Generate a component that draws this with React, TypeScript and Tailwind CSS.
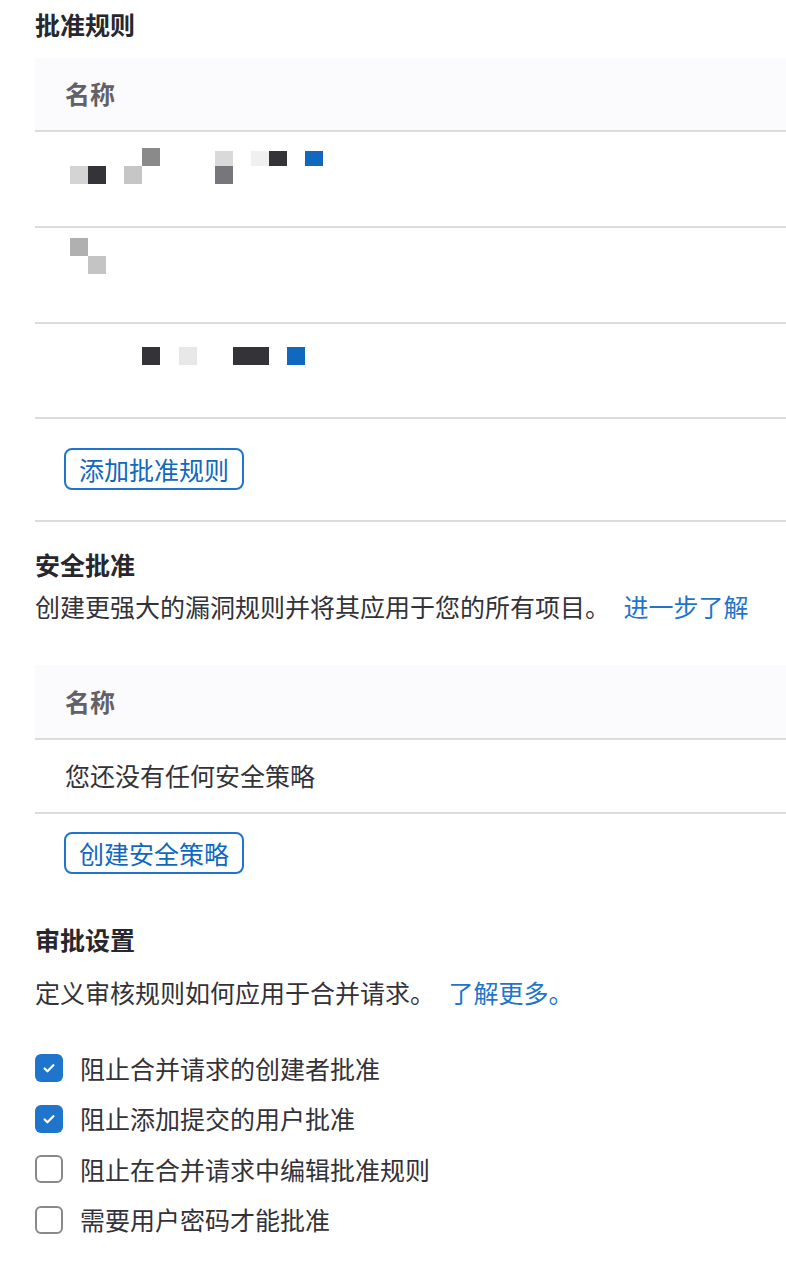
import React from "react";

type Sq = { x: number; y: number; w?: number; h?: number; c: string };

const Mosaic = ({ squares, width, height }: { squares: Sq[]; width: number; height: number }) => (
  <svg width={width} height={height} viewBox={`0 0 ${width} ${height}`}>
    {squares.map((s, i) => (
      <rect key={i} x={s.x} y={s.y} width={s.w ?? 18} height={s.h ?? 18} fill={s.c} />
    ))}
  </svg>
);

const rowOne: Sq[] = [
  { x: 0, y: 18, c: "#d4d4d4" },
  { x: 18, y: 18, c: "#333338" },
  { x: 54, y: 18, c: "#c6c6c6" },
  { x: 72, y: 0, c: "#8a8a8a" },
  { x: 145, y: 3, h: 15, c: "#d9d9d9" },
  { x: 145, y: 18, c: "#77777b" },
  { x: 181, y: 3, h: 15, c: "#f0f0f0" },
  { x: 199, y: 3, h: 15, c: "#333338" },
  { x: 235, y: 3, h: 15, c: "#1068bf" },
];

const rowTwo: Sq[] = [
  { x: 0, y: 0, c: "#b0b0b0" },
  { x: 18, y: 18, c: "#c4c4c4" },
];

const rowThree: Sq[] = [
  { x: 72, y: 0, c: "#333338" },
  { x: 109, y: 0, c: "#e8e8e8" },
  { x: 163, y: 0, w: 36, c: "#333338" },
  { x: 217, y: 0, c: "#1068bf" },
];

const Checkbox = ({ checked, label }: { checked: boolean; label: string }) => (
  <div className="flex items-center h-[50.5px]">
    {checked ? (
      <span className="w-[28px] h-[28px] rounded-[6px] bg-[#1f75cb] flex items-center justify-center">
        <svg width="14" height="14" viewBox="0 0 16 16" fill="none">
          <path d="M3 8.5l3.2 3.2L13 4.8" stroke="white" strokeWidth="2.6" strokeLinecap="round" strokeLinejoin="round" />
        </svg>
      </span>
    ) : (
      <span className="w-[28px] h-[28px] rounded-[6px] border-2 border-[#89888d] bg-white"></span>
    )}
    <span className="ml-[17px]">{label}</span>
  </div>
);

const OutlineButton = ({ children }: { children: React.ReactNode }) => (
  <button className="h-[42px] px-[13px] border-2 border-[#1f75cb] rounded-[8px] text-[#1068bf] leading-[38px]">
    {children}
  </button>
);

export default function App() {
  return (
    <div
      className="pl-[35px] pt-[7px] pb-[30px] bg-white text-[#333238] text-[25px]"
      style={{ fontFamily: '"Noto Sans CJK SC", "Noto Sans", sans-serif' }}
    >
      <h2 className="font-bold leading-[34px] text-[#28272d]">批准规则</h2>

      <div className="mt-[17px]">
        <div className="h-[74px] bg-[#fbfafd] border-b-2 border-[#dcdcde] pl-[30px] flex items-center font-bold text-[#626168]">
          名称
        </div>
        <div className="h-[96px] border-b-2 border-[#dcdcde] pl-[35px] pt-[16px]">
          <Mosaic squares={rowOne} width={260} height={36} />
        </div>
        <div className="h-[96px] border-b-2 border-[#dcdcde] pl-[35px] pt-[10px]">
          <Mosaic squares={rowTwo} width={40} height={36} />
        </div>
        <div className="h-[95px] border-b-2 border-[#dcdcde] pl-[35px] pt-[23px]">
          <Mosaic squares={rowThree} width={240} height={18} />
        </div>
        <div className="pl-[29px] pt-[29px] pb-[30px] border-b-2 border-[#dcdcde]">
          <OutlineButton>添加批准规则</OutlineButton>
        </div>
      </div>

      <h2 className="mt-[25px] font-bold leading-[34px] text-[#28272d]">安全批准</h2>
      <p className="mt-[8px] leading-[34px]">
        创建更强大的漏洞规则并将其应用于您的所有项目。 <span className="ml-[8px] text-[#1f75cb]">进一步了解</span>
      </p>

      <div className="mt-[42px]">
        <div className="h-[75px] bg-[#fbfafd] border-b-2 border-[#dcdcde] pl-[30px] flex items-center font-bold text-[#626168]">
          名称
        </div>
        <div className="h-[74px] border-b-2 border-[#dcdcde] pl-[30px] flex items-center">
          您还没有任何安全策略
        </div>
        <div className="pl-[29px] pt-[18px]">
          <OutlineButton>创建安全策略</OutlineButton>
        </div>
      </div>

      <h2 className="mt-[48px] font-bold leading-[34px] text-[#28272d]">审批设置</h2>
      <p className="mt-[19px] leading-[34px]">
        定义审核规则如何应用于合并请求。 <span className="ml-[8px] text-[#1f75cb]">了解更多。</span>
      </p>

      <div className="mt-[34px] flex flex-col">
        <Checkbox checked label="阻止合并请求的创建者批准" />
        <Checkbox checked label="阻止添加提交的用户批准" />
        <Checkbox checked={false} label="阻止在合并请求中编辑批准规则" />
        <Checkbox checked={false} label="需要用户密码才能批准" />
      </div>
    </div>
  );
}
